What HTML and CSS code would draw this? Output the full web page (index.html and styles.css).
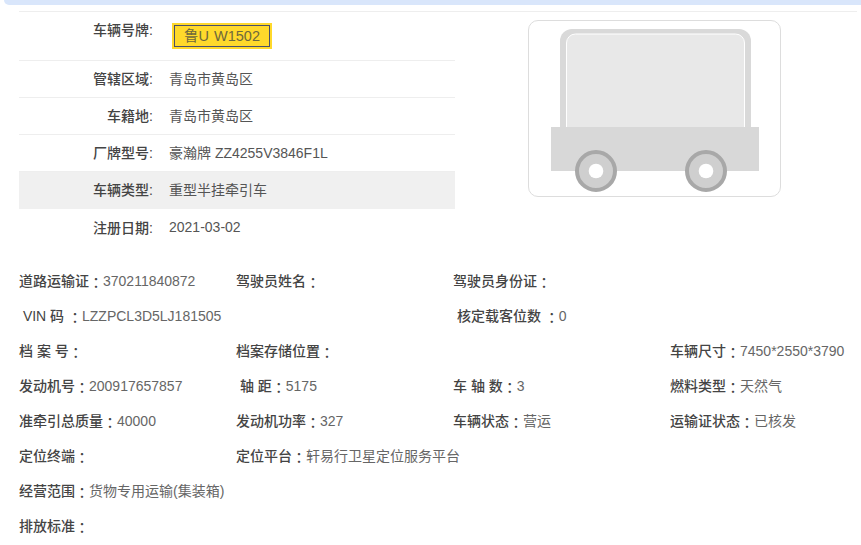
FILE: index.html
```html
<!DOCTYPE html>
<html lang="zh-CN">
<head>
<meta charset="utf-8">
<title>车辆信息</title>
<link rel="stylesheet" href="styles.css">
</head>
<body>
<div class="topbar"></div>
<section class="summary">
  <div class="table">
    <div class="row row-plate"><span class="label">车辆号牌:</span><span class="plate"><span class="plate-inner">鲁U W1502</span></span></div>
    <div class="row"><span class="label">管辖区域:</span><span class="value">青岛市黄岛区</span></div>
    <div class="row"><span class="label">车籍地:</span><span class="value">青岛市黄岛区</span></div>
    <div class="row"><span class="label">厂牌型号:</span><span class="value">豪瀚牌 ZZ4255V3846F1L</span></div>
    <div class="row row-shaded"><span class="label">车辆类型:</span><span class="value">重型半挂牵引车</span></div>
    <div class="row row-last"><span class="label">注册日期:</span><span class="value">2021-03-02</span></div>
  </div>
  <div class="photo">
    <svg class="truck" width="208" height="165" viewBox="0 0 208 165" aria-hidden="true">
      <path d="M9 120V12a12 12 0 0 1 12-12H188a12 12 0 0 1 12 12V120Z" fill="#d9d9d9"/>
      <path d="M15.500 120V14a9 9 0 0 1 9-9H184.500a9 9 0 0 1 9 9V120Z" fill="#e8e8e8" stroke="#fff" stroke-width="1"/>
      <rect x="0" y="98" width="208" height="44" fill="#d8d8d8"/>
      <circle cx="45" cy="142" r="19" fill="#cfcfcf" stroke="#a8a8a8" stroke-width="4"/>
      <circle cx="45" cy="142" r="7.300" fill="#fff"/>
      <circle cx="155" cy="142" r="19" fill="#cfcfcf" stroke="#a8a8a8" stroke-width="4"/>
      <circle cx="155" cy="142" r="7.300" fill="#fff"/>
    </svg>
  </div>
</section>
<section class="details">
  <div class="item"><b>道路运输证<i lang="zh-Hant">：</i></b>370211840872</div>
  <div class="item"><b>驾驶员姓名<i lang="zh-Hant">：</i></b></div>
  <div class="item"><b>驾驶员身份证<i lang="zh-Hant">：</i></b></div>
  <div class="item"></div>

  <div class="item"><b>&nbsp;VIN 码 <i lang="zh-Hant">：</i></b>LZZPCL3D5LJ181505</div>
  <div class="item"></div>
  <div class="item"><b>&nbsp;核定载客位数 <i lang="zh-Hant">：</i></b>0</div>
  <div class="item"></div>

  <div class="item"><b>档 案 号<i lang="zh-Hant">：</i></b></div>
  <div class="item"><b>档案存储位置<i lang="zh-Hant">：</i></b></div>
  <div class="item"></div>
  <div class="item"><b>车辆尺寸<i lang="zh-Hant">：</i></b>7450*2550*3790</div>

  <div class="item"><b>发动机号<i lang="zh-Hant">：</i></b>200917657857</div>
  <div class="item"><b>&nbsp;轴 距<i lang="zh-Hant">：</i></b>5175</div>
  <div class="item"><b>车 轴 数<i lang="zh-Hant">：</i></b>3</div>
  <div class="item"><b>燃料类型<i lang="zh-Hant">：</i></b>天然气</div>

  <div class="item"><b>准牵引总质量<i lang="zh-Hant">：</i></b>40000</div>
  <div class="item"><b>发动机功率<i lang="zh-Hant">：</i></b>327</div>
  <div class="item"><b>车辆状态<i lang="zh-Hant">：</i></b>营运</div>
  <div class="item"><b>运输证状态<i lang="zh-Hant">：</i></b>已核发</div>

  <div class="item"><b>定位终端<i lang="zh-Hant">：</i></b></div>
  <div class="item item-wide"><b>定位平台<i lang="zh-Hant">：</i></b>轩易行卫星定位服务平台</div>

  <div class="item item-full"><b>经营范围<i lang="zh-Hant">：</i></b>货物专用运输(集装箱)</div>
  <div class="item item-full"><b>排放标准<i lang="zh-Hant">：</i></b></div>
</section>
</body>
</html>
```

FILE: styles.css
```css
* { box-sizing: border-box; }
html, body { margin: 0; padding: 0; }
body {
  width: 861px;
  height: 545px;
  overflow: hidden;
  background: #fff;
  color: #555;
  font-family: "Liberation Sans", "Noto Sans CJK SC", sans-serif;
  font-size: 14px;
}
.topbar {
  height: 5px;
  margin-left: 4px;
  background: #d9e6fb;
  border-bottom-left-radius: 5px;
}
.summary {
  display: flex;
  align-items: flex-start;
  margin: 6px 4px 0 19px;
  border-top: 1px solid #eee;
}
.table { width: 436px; }
.row {
  display: flex;
  align-items: center;
  height: 37px;
  padding-bottom: 2px;
  border-bottom: 1px solid #eee;
}
.row-plate { height: 49px; align-items: flex-start; padding: 7px 0 0; }
.row-shaded { background: #f0f0f0; border-bottom: 0; padding-bottom: 4px; }
.row-last { border-bottom: 0; }
.label {
  width: 134px;
  text-align: right;
  font-weight: 500;
  color: #444;
}
.value { margin-left: 16px; }
.plate {
  display: block;
  margin-left: 19px;
  margin-top: 4px;
  background: #ffd92b;
  padding: 2px;
}
.plate-inner {
  display: block;
  width: 96px;
  height: 22px;
  line-height: 21px;
  border: 1px solid #4a4f6a;
  text-align: center;
  font-size: 14.5px;
  word-spacing: 1px;
  color: #6e683c;
}
.photo {
  flex: none;
  width: 253px;
  height: 177px;
  margin: 8px 0 0 73px;
  border: 1px solid #ddd;
  border-radius: 10px;
  padding: 8px 0 0 22px;
}
.truck { display: block; }
.details {
  display: grid;
  grid-template-columns: repeat(4, 217px);
  grid-auto-rows: 35px;
  margin: 18px 0 0 19px;
}
.item {
  line-height: 35px;
  white-space: nowrap;
  color: #666;
}
.item b { font-weight: 500; color: #444; }
.item i {
  font-style: normal;
  font-family: "Noto Sans CJK TC", sans-serif;
  vertical-align: -2px;
  line-height: 1;
}
.item-wide { grid-column: 2 / 5; }
.item-full { grid-column: 1 / 5; }
```
